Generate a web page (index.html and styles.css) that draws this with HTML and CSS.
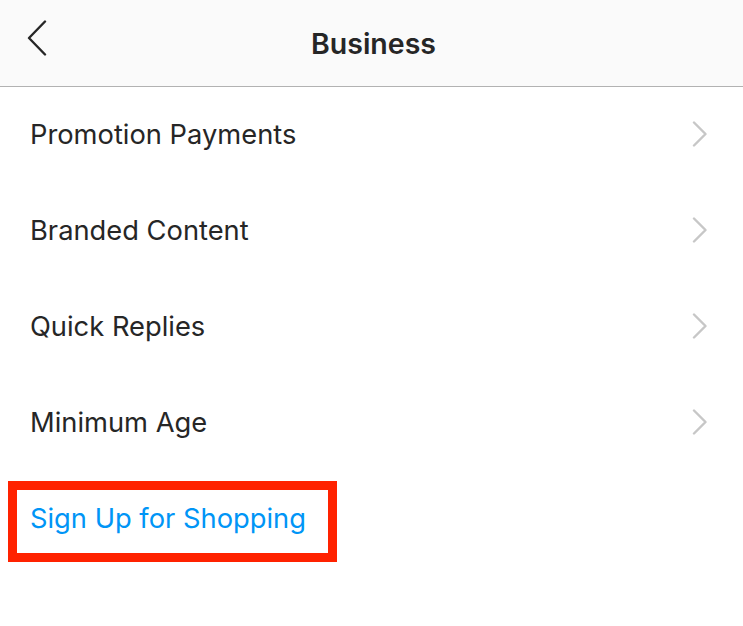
FILE: index.html
```html
<!DOCTYPE html>
<html>
<head>
<meta charset="utf-8">
<link rel="stylesheet" href="styles.css">
</head>
<body>
<header class="nav">
  <button class="back" aria-label="Back">
    <svg width="20" height="36" viewBox="0 0 20 36"><path d="M18 1.5 L2 18 L18 34.5" fill="none" stroke="#262626" stroke-width="2.4" stroke-linecap="round" stroke-linejoin="round"/></svg>
  </button>
  <h1 class="title">Business</h1>
</header>
<ul class="menu">
  <li class="row"><span class="label">Promotion Payments</span><svg class="chev" width="16" height="26" viewBox="0 0 16 26"><path d="M2 1.5 L13.5 13 L2 24.5" fill="none" stroke="#c7c7c7" stroke-width="2.4" stroke-linecap="round" stroke-linejoin="round"/></svg></li>
  <li class="row"><span class="label">Branded Content</span><svg class="chev" width="16" height="26" viewBox="0 0 16 26"><path d="M2 1.5 L13.5 13 L2 24.5" fill="none" stroke="#c7c7c7" stroke-width="2.4" stroke-linecap="round" stroke-linejoin="round"/></svg></li>
  <li class="row"><span class="label">Quick Replies</span><svg class="chev" width="16" height="26" viewBox="0 0 16 26"><path d="M2 1.5 L13.5 13 L2 24.5" fill="none" stroke="#c7c7c7" stroke-width="2.4" stroke-linecap="round" stroke-linejoin="round"/></svg></li>
  <li class="row"><span class="label">Minimum Age</span><svg class="chev" width="16" height="26" viewBox="0 0 16 26"><path d="M2 1.5 L13.5 13 L2 24.5" fill="none" stroke="#c7c7c7" stroke-width="2.4" stroke-linecap="round" stroke-linejoin="round"/></svg></li>
  <li class="row row-link"><span class="label link">Sign Up for Shopping</span><span class="highlight"></span></li>
</ul>
</body>
</html>
```
FILE: styles.css
```css
* { box-sizing: border-box; }
html, body { margin: 0; padding: 0; background: #ffffff; }
body { font-family: "Inter", "Noto Sans", sans-serif; color: #262626; width: 743px; height: 626px; overflow: hidden; }
.nav {
  height: 87px;
  background: #fafafa;
  border-bottom: 1px solid #b2b2b2;
  display: flex;
  align-items: center;
  justify-content: center;
  position: relative;
}
.back {
  position: absolute;
  left: 27px;
  top: 20px;
  background: none;
  border: 0;
  padding: 0;
  width: 20px;
  height: 36px;
  display: block;
}
.back svg { display: block; }
.title {
  margin: 0 0 0 4px;
  font-size: 28.5px;
  font-weight: 600;
  color: #262626;
  letter-spacing: 0;
}
.menu { list-style: none; margin: 0; padding: 0; }
.row {
  height: 96px;
  display: flex;
  align-items: center;
  justify-content: space-between;
  padding: 0 35px 2px 30px;
  position: relative;
}
.label { font-size: 27.3px; font-weight: 400; color: #262626; }
.link { color: #0095f6; }
.chev { display: block; }
.highlight {
  position: absolute;
  left: 8px;
  top: 10px;
  width: 329px;
  height: 81px;
  border: 9px solid #ff2200;
}
```
